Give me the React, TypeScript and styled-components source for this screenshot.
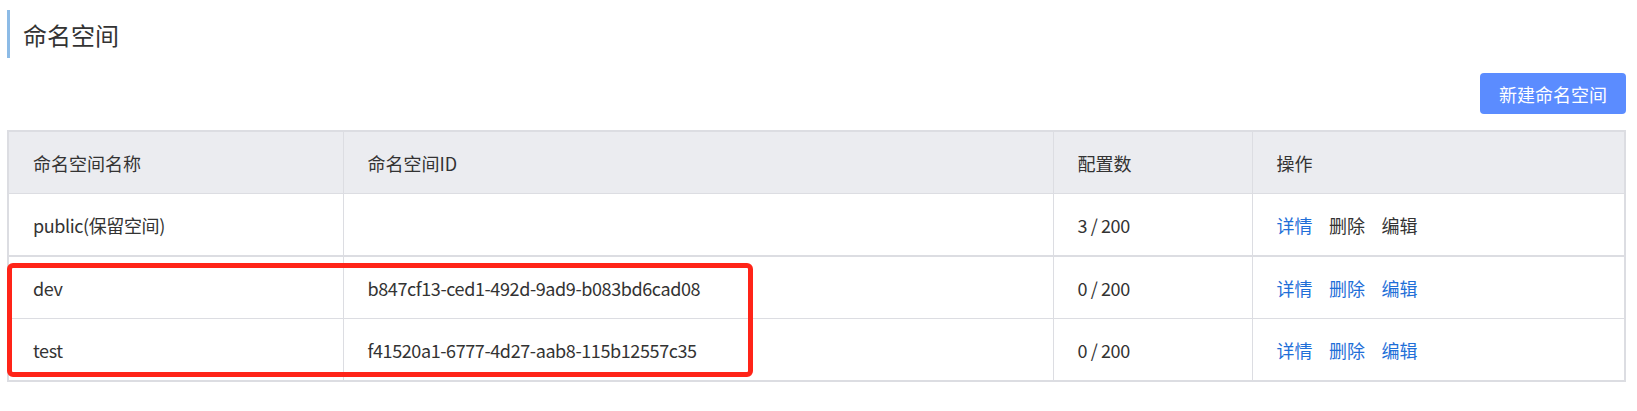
import styled, { createGlobalStyle } from "styled-components";

interface Namespace {
  name: string;
  id: string;
  count: string;
  reserved?: boolean;
}

const rows: Namespace[] = [
  { name: "public(保留空间)", id: "", count: "3 / 200", reserved: true },
  { name: "dev", id: "b847cf13-ced1-492d-9ad9-b083bd6cad08", count: "0 / 200" },
  { name: "test", id: "f41520a1-6777-4d27-aab8-115b12557c35", count: "0 / 200" },
];

const GlobalStyle = createGlobalStyle`
  body {
    margin: 0;
    background: #fff;
    font-family: "Noto Sans CJK SC", "Liberation Sans", sans-serif;
    color: #333;
  }
`;

const App = () => {
  return (
    <Page>
      <GlobalStyle />
      <Title>命名空间</Title>
      <Toolbar>
        <PrimaryButton>新建命名空间</PrimaryButton>
      </Toolbar>
      <TableWrap>
        <Table>
          <colgroup>
            <col style={{ width: 335 }} />
            <col style={{ width: 710 }} />
            <col style={{ width: 199 }} />
            <col />
          </colgroup>
          <thead>
            <tr>
              <Th>命名空间名称</Th>
              <Th>命名空间ID</Th>
              <Th>配置数</Th>
              <Th>操作</Th>
            </tr>
          </thead>
          <tbody>
            {rows.map((r) => (
              <Row key={r.name} $reserved={r.reserved}>
                <Td>{r.name}</Td>
                <Td>{r.id}</Td>
                <Td>{r.count}</Td>
                <Td>
                  <Action>详情</Action>
                  <Action $muted={r.reserved}>删除</Action>
                  <Action $muted={r.reserved}>编辑</Action>
                </Td>
              </Row>
            ))}
          </tbody>
        </Table>
        <Highlight />
      </TableWrap>
    </Page>
  );
};

const Page = styled.div`
  padding: 10px 11px 0 7px;
`;

const Title = styled.h1`
  margin: 0;
  height: 48px;
  border-left: 3px solid #8dbbe6;
  padding-left: 13px;
  display: flex;
  align-items: center;
  font-size: 24px;
  font-weight: 400;
  color: #333;
`;

const Toolbar = styled.div`
  display: flex;
  justify-content: flex-end;
  margin-top: 15px;
`;

const PrimaryButton = styled.button`
  height: 41px;
  width: 146px;
  border: none;
  border-radius: 4px;
  background: #5b8cff;
  color: #fff;
  font-family: inherit;
  font-size: 18px;
  cursor: pointer;
`;

const TableWrap = styled.div`
  position: relative;
  margin-top: 16px;
`;

const Table = styled.table`
  width: 100%;
  table-layout: fixed;
  border-collapse: collapse;
  border: 2px solid #dcdde2;
  font-size: 18px;
`;

const Th = styled.th`
  height: 61px;
  padding: 0 24px;
  text-align: left;
  font-weight: 400;
  background: #ebecf0;
  border: 1px solid #dcdde2;
`;

const Row = styled.tr<{ $reserved?: boolean }>`
  td {
    border-bottom-width: ${(p) => (p.$reserved ? "2px" : "1px")};
  }
`;

const Td = styled.td`
  height: 61px;
  padding: 0 24px;
  border: 1px solid #dcdde2;
  white-space: nowrap;
  letter-spacing: -0.4px;
`;

const Action = styled.a<{ $muted?: boolean }>`
  color: ${(p) => (p.$muted ? "#333" : "#1f6fd8")};
  margin-right: 16.5px;
  letter-spacing: 0;
  cursor: pointer;
`;

// 截图里的红色标注框
const Highlight = styled.div`
  position: absolute;
  left: 0;
  top: 133px;
  width: 746px;
  height: 114px;
  box-sizing: border-box;
  border: 5px solid #ff2418;
  border-radius: 6px;
  pointer-events: none;
`;

export default App;
